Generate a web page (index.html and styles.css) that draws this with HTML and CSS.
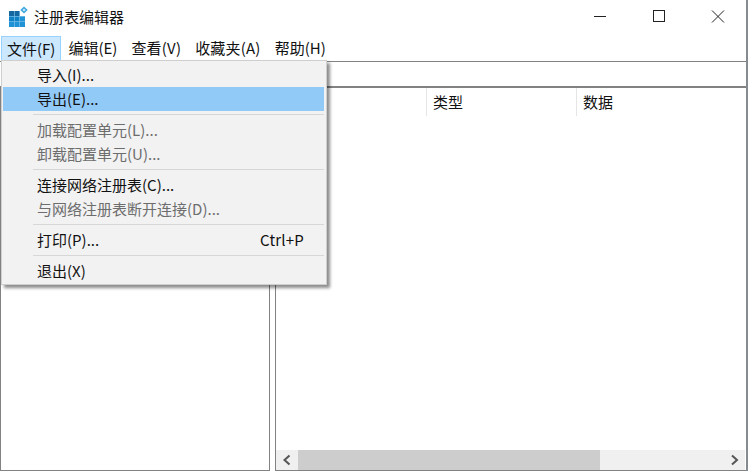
FILE: index.html
```html
<!DOCTYPE html>
<html lang="zh-CN">
<head>
<meta charset="utf-8">
<title>注册表编辑器</title>
<link rel="stylesheet" href="styles.css">
</head>
<body>
<div class="window">
  <header class="titlebar">
    <svg class="app-icon" width="20" height="22" viewBox="0 0 20 22">
      <rect x="0" y="5" width="16" height="16" fill="#1f93d6"/>
      <rect x="0" y="5" width="11" height="5.500" fill="#14689f"/>
      <rect x="0" y="10.500" width="11" height="5" fill="#0f82c6"/>
      <rect x="11" y="5" width="5" height="5" fill="#fff"/>
      <path d="M0 10.500h16M0 15.500h16M5.500 5v16M10.500 5v16" stroke="#7cc0e8" stroke-width="0.700" fill="none"/>
      <path d="M15 0.500l3.700 3.500-3.700 3.500-3.700-3.500z" fill="#3aa6e0"/>
      <circle cx="15" cy="4" r="1.300" fill="#bfe3f7"/>
    </svg>
    <span class="app-title">注册表编辑器</span>
    <div class="controls">
      <svg class="ctrl" width="46" height="36" viewBox="0 0 46 36"><path d="M17 16.500h12" stroke="#222" fill="none"/></svg>
      <svg class="ctrl" width="46" height="36" viewBox="0 0 46 36"><rect x="17.500" y="10.500" width="11" height="11" stroke="#222" fill="none"/></svg>
      <svg class="ctrl" width="46" height="36" viewBox="0 0 46 36"><path d="M17 10.500l12 12M29 10.500l-12 12" stroke="#222" fill="none"/></svg>
    </div>
  </header>
  <nav class="menubar">
    <span class="menu-top active">文件(F)</span>
    <span class="menu-top">编辑(E)</span>
    <span class="menu-top wide">查看(V)</span>
    <span class="menu-top wide">收藏夹(A)</span>
    <span class="menu-top">帮助(H)</span>
  </nav>
  <div class="address"></div>
  <main class="panes">
    <section class="pane-left"></section>
    <section class="pane-right">
      <div class="list-head">
        <span class="col col-name"></span>
        <span class="col col-type">类型</span>
        <span class="col col-data">数据</span>
      </div>
      <div class="list-body"></div>
      <div class="hscroll">
        <svg class="arrow" width="22" height="20" viewBox="0 0 22 20"><path d="M13.500 5.500l-5 4.500 5 4.500" stroke="#555" stroke-width="2" fill="none"/></svg>
        <div class="track"><div class="thumb"></div></div>
        <svg class="arrow" width="22" height="20" viewBox="0 0 22 20"><path d="M9 5.500l5 4.500-5 4.500" stroke="#555" stroke-width="2" fill="none"/></svg>
      </div>
    </section>
  </main>
  <div class="dropdown">
    <div class="item">导入(I)...</div>
    <div class="item selected">导出(E)...</div>
    <div class="sep"></div>
    <div class="item disabled">加载配置单元(L)...</div>
    <div class="item disabled">卸载配置单元(U)...</div>
    <div class="sep"></div>
    <div class="item">连接网络注册表(C)...</div>
    <div class="item disabled">与网络注册表断开连接(D)...</div>
    <div class="sep"></div>
    <div class="item"><span>打印(P)...</span><span class="shortcut">Ctrl+P</span></div>
    <div class="sep"></div>
    <div class="item">退出(X)</div>
  </div>
</div>
</body>
</html>
```

FILE: styles.css
```css
html, body {
  margin: 0;
  padding: 0;
  background: #fff;
}
body {
  font-family: "Noto Sans CJK SC", "Open Sans", sans-serif;
  font-size: 15px;
  color: #111;
}
.window {
  position: relative;
  width: 748px;
  height: 471px;
  box-sizing: border-box;
  overflow: hidden;
  display: flex;
  flex-direction: column;
  background: #fff;
  border-right: 2px solid #868b90;
}
.titlebar {
  height: 36px;
  flex: none;
  display: flex;
  align-items: center;
  padding-left: 9px;
}
.app-icon { flex: none; margin-right: 5px; margin-top: -2px; }
.app-title { line-height: 34px; font-size: 15px; margin-top: -2px; }
.controls { margin-left: auto; display: flex; margin-right: 5px; margin-top: -1px; }
.ctrl { display: block; margin-left: 13px; }
.menubar {
  height: 24px;
  flex: none;
  display: flex;
  padding-left: 1px;
}
.menu-top {
  height: 24px;
  line-height: 24px;
  padding: 0 7px;
  box-sizing: border-box;
  font-size: 15px;
  white-space: nowrap;
}
.menu-top.wide { letter-spacing: 0.2px; }
.menu-top.active {
  background: #cce8ff;
  border: 1px solid #99d1ff;
  border-bottom: 0;
  line-height: 23px;
  padding: 0 5px;
}
.address {
  height: 24px;
  flex: none;
  margin-top: 1px;
  border-top: 1px solid #828282;
  border-bottom: 2px solid #828282;
}
.panes {
  flex: 1;
  min-height: 0;
  display: flex;
  gap: 5px;
}
.pane-left {
  width: 270px;
  box-sizing: border-box;
  flex: none;
  border: 1px solid #828282;
  border-top: 0;
  background: #fff;
}
.pane-right {
  flex: 1;
  box-sizing: border-box;
  border: 1px solid #828282;
  border-top: 0;
  border-right: 0;
  display: flex;
  flex-direction: column;
  background: #fff;
}
.list-head {
  height: 29px;
  flex: none;
  display: flex;
}
.col {
  box-sizing: border-box;
  height: 28px;
  line-height: 28px;
  padding-left: 6px;
  font-size: 15px;
  border-right: 1px solid #e5e5e5;
}
.col-name { width: 151px; }
.col-type { width: 150px; }
.col-data { flex: 1; border-right: 0; }
.list-body { flex: 1; }
.hscroll {
  height: 20px;
  flex: none;
  margin-right: 1px;
  display: flex;
  align-items: stretch;
  background: #f0f0f0;
}
.arrow { display: block; flex: none; }
.track { flex: 1; }
.thumb { width: 302px; height: 100%; background: #cdcdcd; }
.dropdown {
  position: absolute;
  left: 1px;
  top: 60px;
  width: 326px;
  height: 225px;
  box-sizing: border-box;
  background: #f2f2f2;
  border: 1px solid #cfcfcf;
  padding: 2px 2px 2px 1px;
  box-shadow: 3px 3px 3px rgba(0, 0, 0, 0.45);
}
.item {
  height: 24px;
  line-height: 24px;
  padding: 0 20px 0 34px;
  display: flex;
  justify-content: space-between;
  white-space: nowrap;
  font-size: 15px;
}
.item.selected { background: #91c9f7; }
.item.disabled { color: #6d6d6d; }
.shortcut { letter-spacing: 0.2px; }
.sep {
  height: 1px;
  margin: 3px 0 3px 30px;
  background: #d7d7d7;
}
```
